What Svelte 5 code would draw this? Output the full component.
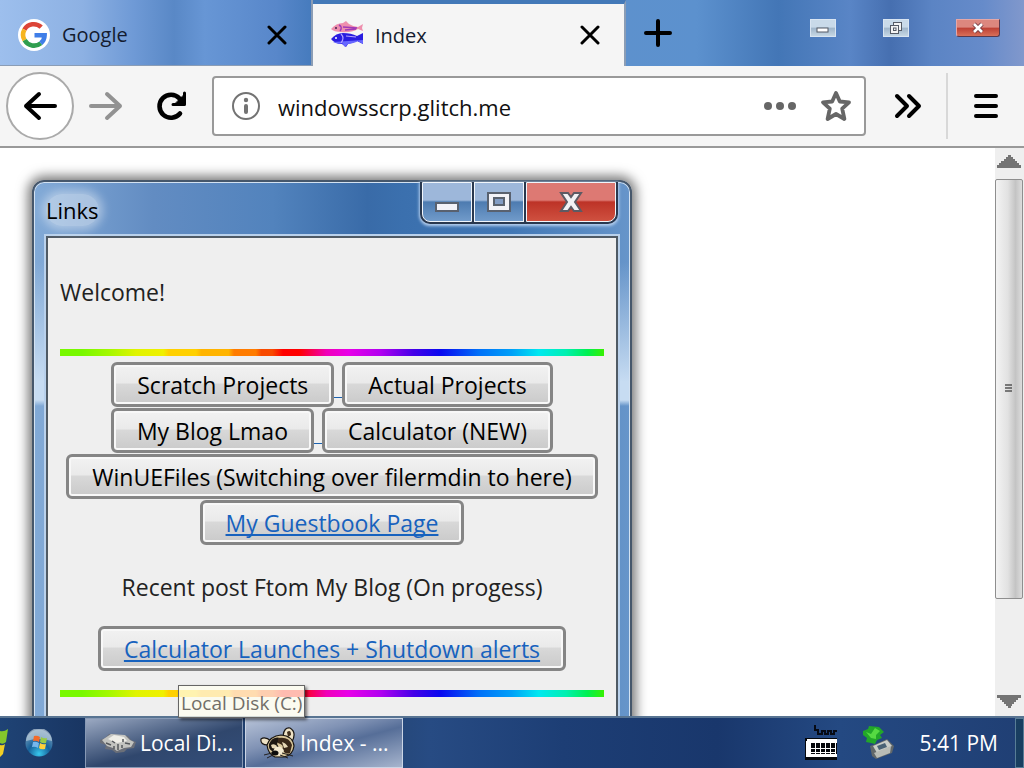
<script lang="ts">
	let url = $state('windowsscrp.glitch.me');

	const rows = [
		['Scratch Projects', 'Actual Projects'],
		['My Blog Lmao', 'Calculator (NEW)'],
		['WinUEFiles (Switching over filermdin to here)']
	];
</script>

<div class="screen">
	<header class="tabs">
		<div class="tab">
			<svg class="favicon" viewBox="0 0 32 32" aria-hidden="true">
				<circle cx="16" cy="16" r="16" fill="#fff" />
				<g fill="none" stroke-width="4.6">
					<path d="M6.4 10.6A10.8 10.8 0 0 1 23.2 8.2" stroke="#dc4437" />
					<path d="M6.6 21.2A10.8 10.8 0 0 1 6.4 10.6" stroke="#f6b51e" />
					<path d="M22.8 24.2A10.8 10.8 0 0 1 6.6 21.2" stroke="#2f9e4f" />
					<path d="M16.5 16.2H26.6A10.8 10.8 0 0 1 22.8 24.2" stroke="#3f7ee8" />
				</g>
			</svg>
			<span class="tab-title">Google</span>
			<button class="icon-button close" aria-label="Close Google">
				<svg width="20" height="20" viewBox="0 0 20 20"><path d="M2 2L18 18M18 2L2 18" /></svg>
			</button>
		</div>
		<div class="tab active">
			<svg class="favicon" viewBox="0 0 32 32" aria-hidden="true">
				<path d="M0 10Q5 4 12 4L15 2L18 5Q23 8 27 8L32 5L31 9L32 12L27 10Q20 14 10 13Q3 13 0 10Z" fill="#ee8fae" />
				<path d="M8 6Q12 8 9 12M12 8L26 9M14 11L25 10" stroke="#a03ab8" stroke-width="1.4" fill="none" />
				<circle cx="5" cy="9" r="1" fill="#402050" />
				<path d="M0 20Q5 14 12 14Q20 14 26 17L32 14V25L26 22Q22 24 17 25L15 28L11 25Q4 25 0 20Z" fill="#291ce0" />
				<path d="M2 23Q8 26 11 24L14 28L17 25Q24 24 27 22L32 25V21Q17 22 2 23Z" fill="#6767ff" />
				<path d="M10 15Q14 19 10 24M15 17L25 18" stroke="#b3a0ff" stroke-width="1.2" fill="none" />
				<circle cx="5" cy="19" r="1" fill="#fff" />
			</svg>
			<span class="tab-title">Index</span>
			<button class="icon-button close" aria-label="Close Index">
				<svg width="20" height="20" viewBox="0 0 20 20"><path d="M2 2L18 18M18 2L2 18" /></svg>
			</button>
		</div>
		<button class="icon-button new-tab" aria-label="New tab">
			<svg width="28" height="28" viewBox="0 0 28 28"><path d="M14 2V26M2 14H26" stroke-width="4" /></svg>
		</button>
		<div class="caption">
			<button class="caption-button" aria-label="Minimize">
				<svg width="14" height="10" viewBox="0 0 14 10"><rect x="1" y="5" width="11" height="4" fill="#fff" stroke="#555b66" /></svg>
			</button>
			<button class="caption-button" aria-label="Restore">
				<svg width="14" height="14" viewBox="0 0 14 14" fill="#f4f4f4" stroke="#555b66">
					<rect x="4.5" y="1.5" width="8" height="8" /><rect x="1.5" y="4.5" width="8" height="8" /><rect x="4.5" y="7" width="2.5" height="2.5" />
				</svg>
			</button>
			<button class="caption-button red" aria-label="Close window">
				<svg width="14" height="12" viewBox="0 0 14 12">
					<path d="M3 2L11 10M11 2L3 10" stroke="#723a40" stroke-width="4.5" />
					<path d="M3 2L11 10M11 2L3 10" stroke="#fff" stroke-width="2.6" />
				</svg>
			</button>
		</div>
	</header>

	<nav class="toolbar">
		<button class="icon-button back" aria-label="Back">
			<svg width="34" height="30" viewBox="0 0 34 30"><path d="M32 15H3M16 3L3 15L16 27" stroke-width="4" /></svg>
		</button>
		<button class="icon-button forward" aria-label="Forward">
			<svg width="34" height="30" viewBox="0 0 34 30"><path d="M2 15H31M18 3L31 15L18 27" stroke-width="4" /></svg>
		</button>
		<button class="icon-button reload" aria-label="Reload">
			<svg width="32" height="30" viewBox="0 0 32 30">
				<path d="M25 22.5A11.5 11.5 0 1 1 24.5 7.5L27 10" stroke-width="4.6" />
				<path d="M29.5 2V13.5H18" stroke-width="3" /><path d="M29 4V13H20Z" fill="#000" stroke-width="1" />
			</svg>
		</button>
		<div class="address">
			<svg width="28" height="28" viewBox="0 0 28 28" fill="none" aria-hidden="true">
				<circle cx="14" cy="14" r="13" stroke="#737373" stroke-width="2" />
				<circle cx="14" cy="8" r="2.2" fill="#737373" /><path d="M14 14V20" stroke="#737373" stroke-width="4" stroke-linecap="round" />
			</svg>
			<input type="text" aria-label="Address" bind:value={url} spellcheck="false" />
			<button class="icon-button" aria-label="Page actions">
				<svg width="32" height="10" viewBox="0 0 32 10"><g fill="#666" stroke="none"><circle cx="4" cy="5" r="4" /><circle cx="16" cy="5" r="4" /><circle cx="28" cy="5" r="4" /></g></svg>
			</button>
			<button class="icon-button star" aria-label="Bookmark this page">
				<svg width="32" height="32" viewBox="0 0 32 32"><path d="M16 3L19.8 11.5L29 12.3L22.2 18.7L24.4 29L16 24L7.6 29L9.8 18.7L3 12.3L12.2 11.5Z" stroke="#666" stroke-width="3.8" /></svg>
			</button>
		</div>
		<button class="icon-button more" aria-label="More tools">
			<svg width="28" height="26" viewBox="0 0 28 26"><path d="M3 3L13 13L3 23M15 3L25 13L15 23" stroke-width="4" /></svg>
		</button>
		<button class="icon-button menu" aria-label="Open menu">
			<svg width="26" height="26" viewBox="0 0 26 26"><path d="M3 3H23M3 13H23M3 23H23" stroke-width="4" /></svg>
		</button>
	</nav>

	<div class="viewport">
		<main class="page">
			<section class="window">
				<div class="titlebar">
					<h1>Links</h1>
					<div class="controls">
						<button aria-label="Minimize Links">
							<svg width="24" height="12" viewBox="0 0 24 12"><rect x="1" y="2" width="22" height="8" fill="#f2f2f8" stroke="#59616f" stroke-width="2" /></svg>
						</button>
						<button aria-label="Maximize Links">
							<svg width="24" height="20" viewBox="0 0 24 20"><rect x="1" y="1" width="22" height="18" fill="#f2f2f8" stroke="#59616f" stroke-width="2" /><rect x="7" y="6" width="10" height="7" fill="#829cc5" stroke="#59616f" stroke-width="2" /></svg>
						</button>
						<button class="red" aria-label="Close Links">
							<svg width="24" height="20" viewBox="0 0 24 20">
								<path d="M2 1H9L12 5L15 1H22L16 10L22 19H15L12 15L9 19H2L8 10Z" fill="#f2f2f4" stroke="#5d5a63" stroke-width="2" />
							</svg>
						</button>
					</div>
				</div>
				<div class="content">
					<p class="welcome">Welcome!</p>
					<div class="rainbow"></div>
					<div class="links">
						{#each rows as row}
							<div class="row">
								{#each row as label, i}
									{#if i > 0}<span class="space"></span>{/if}
									<button class="btn">{label}</button>
								{/each}
							</div>
						{/each}
						<div class="row"><button class="btn link">My Guestbook Page</button></div>
					</div>
					<p class="recent">Recent post Ftom My Blog (On progess)</p>
					<div class="row"><button class="btn link">Calculator Launches + Shutdown alerts</button></div>
					<div class="rainbow last"></div>
				</div>
			</section>
		</main>
		<div class="scrollbar">
			<button class="arrow" aria-label="Scroll up">
				<svg width="24" height="14" viewBox="0 0 24 14" shape-rendering="crispEdges"><path d="M11 0H14V2H16V4H18V6H20V8H22V10H24V13H0V10H2V8H4V6H7V4H9V2H11Z" fill="#747474" /></svg>
			</button>
			<div class="track">
				<div class="thumb">
					<svg width="8" height="9" viewBox="0 0 8 9"><path d="M0 1H7M0 4H7M0 7H7" stroke="#555" stroke-width="1.5" /></svg>
				</div>
			</div>
			<button class="arrow" aria-label="Scroll down">
				<svg width="24" height="14" viewBox="0 0 24 14" shape-rendering="crispEdges"><path d="M0 0H24V3H21V5H19V7H17V9H15V11H14V13H11V11H9V9H7V7H5V5H3V3H0Z" fill="#747474" /></svg>
			</button>
		</div>
	</div>

	<footer class="taskbar">
		<div class="tooltip" role="tooltip">Local Disk (C:)</div>
		<svg class="flag" width="8" height="30" viewBox="0 0 8 30" aria-hidden="true">
			<path d="M0 3Q4 4 8 1L6 14Q3 17 0 15Z" fill="#85c72c" /><path d="M0 17Q3 18 5 16L3 26L0 29Z" fill="#f1cf25" />
		</svg>
		<button class="orb" aria-label="Start">
			<svg width="28" height="28" viewBox="0 0 28 28">
				<defs>
					<radialGradient id="orb" cx=".5" cy=".9" r=".9"><stop offset="0" stop-color="#38c9ee" /><stop offset=".45" stop-color="#17619a" /><stop offset="1" stop-color="#82a2bd" /></radialGradient>
				</defs>
				<circle cx="14" cy="14" r="13.5" fill="url(#orb)" />
				<path d="M1 12A13 13 0 0 1 27 12Q14 8 1 12Z" fill="#c3d2df" opacity=".65" />
				<path d="M9 7Q12 6 15 8L14 13Q11 11 8 12Z" fill="#f36b2b" /><path d="M16 8Q19 10 22 9L21 14Q18 15 15 13Z" fill="#9acb46" />
				<path d="M8 13Q11 12 14 14L13 19Q10 17 7 18Z" fill="#75b7ec" /><path d="M15 14Q18 16 21 15L20 20Q16 21 14 19Z" fill="#ffd13b" />
			</svg>
		</button>
		<button class="task">
			<svg width="36" height="24" viewBox="0 0 36 24" aria-hidden="true">
				<path d="M0 9L5 7L9 3L20 4L28 5L31 9L36 11L34 17L27 18L24 21L16 22L12 19L5 18L6 14L0 12Z" fill="#6b6f78" />
				<path d="M2 9L11 3L25 4L30 9L34 11L31 16L24 17L17 20L13 17L7 15Z" fill="#c3c4c0" />
				<path d="M8 8L14 4L24 6L27 10L17 12L12 10Z" fill="#efeee7" />
				<path d="M6 12L11 14M14 15V18M18 13V19M22 14V17M25 12L30 13M12 10L15 12M23 8V11" stroke="#55585b" stroke-width="1.5" />
			</svg>
			<span>Local Di...</span>
		</button>
		<button class="task current">
			<svg width="36" height="32" viewBox="0 0 36 32" aria-hidden="true">
				<g stroke="#191511" stroke-width="1.2">
					<path d="M23 9Q24 0 30 1Q37 5 32 15Z" fill="#eee2c5" /><path d="M8 18Q0 18 1 12Q5 9 11 14Z" fill="#eee2c5" />
					<path d="M7 18Q10 9 21 8Q33 9 34 19Q33 28 24 30L15 30Q8 27 7 18Z" fill="#d9c79b" />
				</g>
				<path d="M9 17Q13 9 20 11L17 17L20 22Q17 26 12 24Q8 22 9 17Z" fill="#1d1712" />
				<path d="M18 11Q29 9 32 18L30 26Q25 28 22 22Q25 18 18 16Z" fill="#392819" />
				<path d="M11 18Q14 16 17 19L16 22L12 21ZM22 15Q26 16 28 20L24 21Z" fill="#e8d9b7" />
				<path d="M16 20Q22 18 24 24L20 29L14 28Q12 23 16 20Z" fill="#f4ead0" /><ellipse cx="15" cy="26" rx="3.5" ry="2.5" fill="#0d0c0b" />
				<path d="M27 5Q31 2 31 8L28 10Z" fill="#41301e" /><path d="M12 26L4 28M13 28L7 31M20 28L28 31M22 26L33 29" stroke="#242020" stroke-width="1" />
			</svg>
			<span>Index - ...</span>
		</button>
		<div class="tray">
			<svg width="32" height="36" viewBox="0 0 32 36" shape-rendering="crispEdges" aria-hidden="true">
				<path d="M10 0V5H13V9H17V6H20V9H23V6H26V9H29V6H32" fill="none" stroke="#070b15" stroke-width="2" />
				<rect y="13" width="32" height="22" fill="#05070b" /><path d="M2 14H32V18H6V29H32V32H1V18Z" fill="#fff" />
				<path d="M6 23H31M6 27H31" stroke="#fff" stroke-width="1" /><path d="M10 18V31M15 18V31M20 18V31M25 18V31M30 18V31" stroke="#fff" stroke-width="1" />
			</svg>
			<svg width="32" height="34" viewBox="0 0 32 34" aria-hidden="true">
				<path d="M8 20L14 18L25 13L32 20L30 27L14 33L10 30Z" fill="#62686a" /><path d="M11 20L25 14L30 20L15 27Z" fill="#c9cdc8" />
				<path d="M12 27L29 20L28 27L15 32Z" fill="#b9bcb6" /><path d="M15 20L23 17L25 21L17 24Z" fill="#496275" />
				<path d="M1 5L6 3L7 0L17 1L22 6L18 9L20 12L15 14L13 18L9 17L4 16L5 12L1 9Z" fill="#22a729" />
				<path d="M4 6L9 8L13 2L18 5L14 9L14 13L9 12Z" fill="#55da42" />
			</svg>
			<time>5:41 PM</time>
			<button class="show-desktop" aria-label="Show desktop"></button>
		</div>
	</footer>
</div>

<style>
	:global(body) {
		margin: 0;
	}

	.screen {
		display: flex;
		flex-direction: column;
		height: 100vh;
		overflow: hidden;
		font-family: 'Open Sans', 'Noto Sans', sans-serif;
		font-size: 22px;
		color: #222;
		background: #fff;
	}

	button {
		font: inherit;
		margin: 0;
		padding: 0;
		cursor: pointer;
	}

	svg {
		display: block;
		flex: none;
	}

	.icon-button {
		display: flex;
		align-items: center;
		justify-content: center;
		border: 0;
		background: none;
		flex: none;
	}

	.icon-button svg {
		fill: none;
		stroke: #000;
		stroke-width: 3;
		stroke-linecap: round;
		stroke-linejoin: round;
	}

	.tabs {
		display: flex;
		flex: none;
		height: 66px;
		background: linear-gradient(90deg, #9dbfed 0%, #8db1e3 8%, #6f9ad6 13%, #5988c6 17%, #6796d5 20%, #5887ca 27%, #4379bb 31%, #5d91cd 61%, #5c91ce 68%, #4376b6 76%, #5985c6 83%, #466fb0 87%, #5b84c4 91%, #668bca 96%, #8198cc 100%);
	}

	.tab {
		box-sizing: border-box;
		display: flex;
		align-items: center;
		flex: 0 1 313px;
		padding: 4px 24px 0 18px;
		border-right: 2px solid #8b9db5;
		border-bottom: 1px solid #8b9db5;
	}

	.tab.active {
		background: #f5f5f5;
		border-top: 4px solid #4379b8;
		border-bottom: 0;
		padding-top: 0;
	}

	.favicon {
		width: 32px;
		height: 32px;
	}

	.tab-title {
		flex: 1;
		margin-left: 12px;
		font-size: 20px;
		color: #141c30;
	}

	.new-tab {
		width: 64px;
	}

	.caption {
		display: flex;
		gap: 47px;
		margin: 19px 24px 0 auto;
	}

	.caption-button {
		display: flex;
		align-items: center;
		justify-content: center;
		box-sizing: border-box;
		width: 26px;
		height: 18px;
		border: 1px solid #d9e5f2;
		background: linear-gradient(#c9dae9 0 45%, #9fb5ca 50%, #c5d7e4);
	}

	.caption-button.red {
		width: 44px;
		border-color: #e5a7a7 #58394e #58394e #e5a7a7;
		border-radius: 0 0 3px 3px;
		background: linear-gradient(#dc877e 0 45%, #bd4034 50%, #d96f58);
	}

	.toolbar {
		box-sizing: border-box;
		display: flex;
		align-items: center;
		flex: none;
		height: 82px;
		padding-left: 6px;
		border-bottom: 2px solid #999;
		background: #f5f5f5;
	}

	.back {
		box-sizing: border-box;
		width: 68px;
		height: 68px;
		border: 2px solid #aaa;
		border-radius: 50%;
		background: #fff;
	}

	.forward {
		width: 64px;
	}

	.forward svg {
		stroke: #929292;
	}

	.reload {
		width: 66px;
	}

	.address {
		box-sizing: border-box;
		display: flex;
		align-items: center;
		flex: 1;
		min-width: 0;
		height: 60px;
		margin-left: 8px;
		padding: 0 12px 0 18px;
		border: 2px solid #999;
		border-radius: 4px;
		background: #fff;
	}

	.address input {
		flex: 1;
		min-width: 0;
		margin: 0 18px;
		padding: 2px 0 0;
		border: 0;
		outline: 0;
		font: inherit;
		color: #111;
		background: none;
	}

	.star {
		margin-left: 24px;
	}

	.more {
		box-sizing: border-box;
		width: 82px;
		height: 66px;
		padding-left: 4px;
		border-right: 2px solid #d8d8d8;
	}

	.menu {
		width: 76px;
	}

	.viewport {
		display: flex;
		flex: 1;
		min-height: 0;
	}

	.page {
		flex: 1;
		min-width: 0;
		overflow: hidden;
		padding: 32px 32px 0;
	}

	.window {
		box-sizing: border-box;
		max-width: 600px;
		padding: 0 12px 12px;
		border: 2px solid #46576b;
		border-radius: 12px 12px 0 0;
		background:
			linear-gradient(#c7dcf200 0 80px, #c7dcf2 200px 218px, #c7dcf200 224px),
			linear-gradient(90deg, #82aad7 0, #628cc2 20%, #5283bd 40%, #396ba8 56%, #3b70ae 62%, #4177b5 80%, #6795ca 100%);
		box-shadow: inset 0 0 0 1px #d3e2f2, 0 0 12px 4px #777;
	}

	.titlebar {
		display: flex;
		justify-content: space-between;
		align-items: flex-start;
		height: 54px;
	}

	h1 {
		margin: 12px 0 0;
		border-radius: 16px;
		font-size: 22px;
		font-weight: 400;
		line-height: 32px;
		color: #000;
		background: #ffffff66;
		box-shadow: 0 0 10px 4px #ffffff66;
	}

	.controls {
		display: flex;
		gap: 2px;
		padding: 0 2px 2px;
		border-radius: 0 0 10px 10px;
		background: #29384f;
		box-shadow: 0 1px 3px 1px #b5cfee;
	}

	.controls button {
		display: flex;
		align-items: center;
		justify-content: center;
		box-sizing: border-box;
		width: 50px;
		height: 40px;
		border: 1px solid #f0f5fb;
		background: linear-gradient(#9db7da 0 45%, #4d7bb0 50%, #719bca);
	}

	.controls button:first-child {
		border-bottom-left-radius: 8px;
	}

	.controls button:first-child svg {
		margin-top: 9px;
	}

	.controls .red {
		width: 90px;
		border-bottom-right-radius: 8px;
		background: linear-gradient(#dd7973 0 45%, #bd3327 50%, #cf5140);
	}

	.content {
		padding: 0 12px 40px;
		border: 2px solid #4f5a65;
		font-size: 23px;
		background: #efefef;
		box-shadow: 0 0 0 2px #b9d1ec;
	}

	p {
		margin: 0;
		line-height: 32px;
	}

	.welcome {
		padding: 38px 0 41px;
	}

	.rainbow {
		height: 7px;
		background: linear-gradient(90deg, #78f800 0 4%, #a4f800 9%, #e0f400 14%, #f0f000 19%, #ffd000 20% 25%, #ffb400 26% 31%, #ff7c00 32% 36%, #f84a00 37% 39%, #f00 41% 44%, #f000b8 49%, #e800e8 53%, #b000f0 59%, #4400e8 65%, #0808f0 70%, #0070f8 77%, #00a0f8 83%, #00e8f0 88%, #00f0b0 93%, #00f050 97%, #38f000 100%);
	}

	.rainbow.last {
		margin-top: 19px;
	}

	.links {
		display: flex;
		flex-direction: column;
		gap: 1px;
		padding-top: 6px;
	}

	.row {
		display: flex;
		justify-content: center;
	}

	.space {
		width: 8px;
		height: 35px;
		border-bottom: 1px solid #1b62b0;
		margin-bottom: 9px;
	}

	.btn {
		box-sizing: border-box;
		height: 45px;
		padding: 0 23px;
		border: 3px solid #858585;
		border-radius: 6px;
		color: #000;
		background: linear-gradient(#f2f2f2 0, #eaeaea 45%, #d8d8d8 50%, #cacaca 100%);
		box-shadow: inset 0 0 0 2px #f8f8f8;
		white-space: nowrap;
	}

	.link {
		color: #1762be;
		text-decoration: underline;
		text-decoration-thickness: 2px;
		text-decoration-skip-ink: none;
		text-underline-offset: 2px;
	}

	.recent {
		padding: 26px 0 23px;
		text-align: center;
	}

	.scrollbar {
		display: flex;
		flex-direction: column;
		flex: none;
		width: 29px;
		background: #efefef;
	}

	.arrow {
		display: flex;
		align-items: center;
		justify-content: center;
		height: 31px;
		padding: 0 1px 3px 0;
		border: 0;
		background: none;
	}

	.arrow:last-child {
		padding: 3px 1px 0 0;
	}

	.track {
		flex: 1;
	}

	.thumb {
		box-sizing: border-box;
		display: flex;
		align-items: center;
		justify-content: center;
		height: 83%;
		margin-right: 1px;
		border: 1px solid #8e8e8e;
		border-radius: 2px;
		background: linear-gradient(90deg, #f3f3f3, #e2e2e2 45%, #c4c4c4 75%, #dcdcdc);
	}

	.taskbar {
		position: relative;
		box-sizing: border-box;
		display: flex;
		align-items: center;
		flex: none;
		height: 52px;
		border-top: 2px solid #587492;
		color: #fff;
		background: linear-gradient(90deg, #1f4375 0, #193663 8%, #254778 38%, #274b83 42%, #1d3e75 55%, #19376c 70%, #244982 82%, #203f74 100%);
	}

	.flag {
		margin-right: 17px;
	}

	.orb {
		width: 28px;
		height: 28px;
		margin-right: 32px;
		border: 0;
		border-radius: 50%;
		background: none;
	}

	.task {
		box-sizing: border-box;
		display: flex;
		align-items: center;
		gap: 4px;
		flex: 0 1 158px;
		height: 50px;
		margin-right: 2px;
		padding: 0 8px 0 14px;
		border: 1px solid #8799b5;
		color: #fff;
		font-size: 21px;
		white-space: nowrap;
		background: linear-gradient(165deg, #9ba9c2 0, #637696 28%, #30476d 55%, #344f7b 100%);
	}

	.task.current {
		border-color: #cbd5e5;
		background: linear-gradient(165deg, #b6c2d7 0, #8193b5 35%, #566e98 55%, #a6b4cd 100%);
	}

	.tooltip {
		position: absolute;
		left: 178px;
		bottom: 50px;
		box-sizing: border-box;
		height: 33px;
		padding: 0 2px;
		border: 1px solid #666;
		font-size: 19px;
		line-height: 34px;
		color: #716e68;
		background: #fffff0bb;
		box-shadow: 2px 2px 3px #0008;
		white-space: nowrap;
	}

	.tray {
		display: flex;
		align-items: center;
		align-self: stretch;
		gap: 25px;
		margin-left: auto;
	}

	time {
		font-size: 21px;
	}

	.show-desktop {
		width: 9px;
		align-self: stretch;
		margin-left: -8px;
		border: 1px solid #587d96;
		background: #193e60;
	}
</style>
